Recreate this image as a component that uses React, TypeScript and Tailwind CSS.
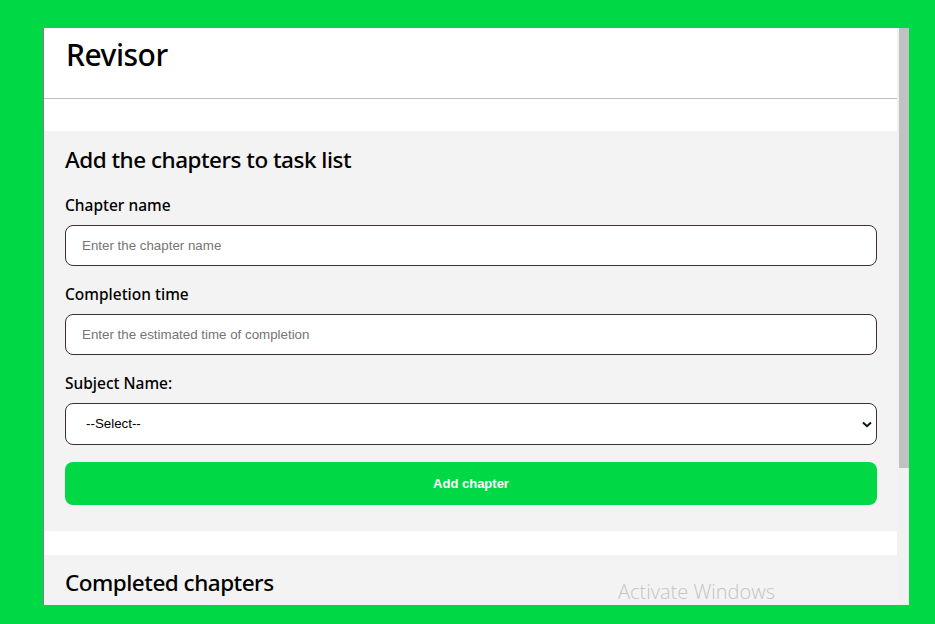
import React from "react";

export default function App() {
  const head = { fontFamily: '"Noto Sans", "Open Sans", sans-serif' };
  const arial = { fontFamily: '"Liberation Sans", Arial, sans-serif' };
  return (
    <div className="w-[935px] h-[624px] bg-[#00d846] overflow-hidden pt-[28px] pl-[43px]">
      <div className="relative w-[866px] h-[577px] bg-white border-l border-[#808080] flex overflow-hidden">
        <div className="flex-1 flex flex-col">
          <header className="h-[71px] border-b border-[#c0c0c0] pl-[22px] pt-[6px]" style={head}>
            <h1 className="text-[30px] leading-[42px] font-medium text-black tracking-[-0.5px]">Revisor</h1>
          </header>
          <div className="h-[32px]" />
          <section className="bg-[#f3f3f3] h-[400px] pl-[21px] pr-[20px] pt-[13px]">
            <h2 className="text-[22.5px] leading-[32px] font-medium text-black tracking-[-0.5px]" style={head}>
              Add the chapters to task list
            </h2>
            <label className="block mt-[17px] text-[15.5px] leading-[24px] font-medium text-black" style={head}>
              Chapter name
            </label>
            <input
              className="mt-[8px] w-full h-[41px] rounded-[8px] border border-[#3d3030] bg-white px-[16px] text-[13.333px] placeholder:text-[#757575] outline-none"
              style={arial}
              placeholder="Enter the chapter name"
            />
            <label className="block mt-[16px] text-[15.5px] leading-[24px] font-medium text-black" style={head}>
              Completion time
            </label>
            <input
              className="mt-[8px] w-full h-[41px] rounded-[8px] border border-[#3d3030] bg-white px-[16px] text-[13.333px] placeholder:text-[#757575] outline-none"
              style={arial}
              placeholder="Enter the estimated time of completion"
            />
            <label className="block mt-[16px] text-[15.5px] leading-[24px] font-medium text-black" style={head}>
              Subject Name:
            </label>
            <div className="relative mt-[8px]">
              <select
                className="appearance-none w-full h-[42px] rounded-[8px] border border-[#3d3030] bg-white pl-[20px] text-[13.333px] text-black outline-none"
                style={arial}
                defaultValue=""
              >
                <option value="">--Select--</option>
              </select>
              <svg
                className="absolute right-[5px] top-[18px] pointer-events-none"
                width="10"
                height="7"
                viewBox="0 0 10 7"
              >
                <path d="M1 1.5 L5 5.2 L9 1.5" stroke="#111" strokeWidth="2" fill="none" />
              </svg>
            </div>
            <button
              className="mt-[17px] w-full h-[43px] rounded-[8px] bg-[#00d846] text-white text-[13px] font-bold"
              style={arial}
            >
              Add chapter
            </button>
          </section>
          <div className="h-[24px]" />
          <section className="bg-[#f3f3f3] flex-1 pl-[21px] pt-[12px]">
            <h2 className="text-[22.5px] leading-[32px] font-medium text-black tracking-[-0.5px]" style={head}>
              Completed chapters
            </h2>
          </section>
        </div>
        <div className="w-[12px] bg-[#f1f1f1] flex">
          <div className="ml-[2px] w-[10px] h-[440px] bg-[#c1c1c1]" />
        </div>
        <div
          className="absolute left-[574px] top-[550px] text-[20px] leading-[28px] text-[#c4c4c4] font-light"
          style={{ fontFamily: '"Open Sans", "Noto Sans", sans-serif' }}
        >
          Activate Windows
        </div>
      </div>
    </div>
  );
}
